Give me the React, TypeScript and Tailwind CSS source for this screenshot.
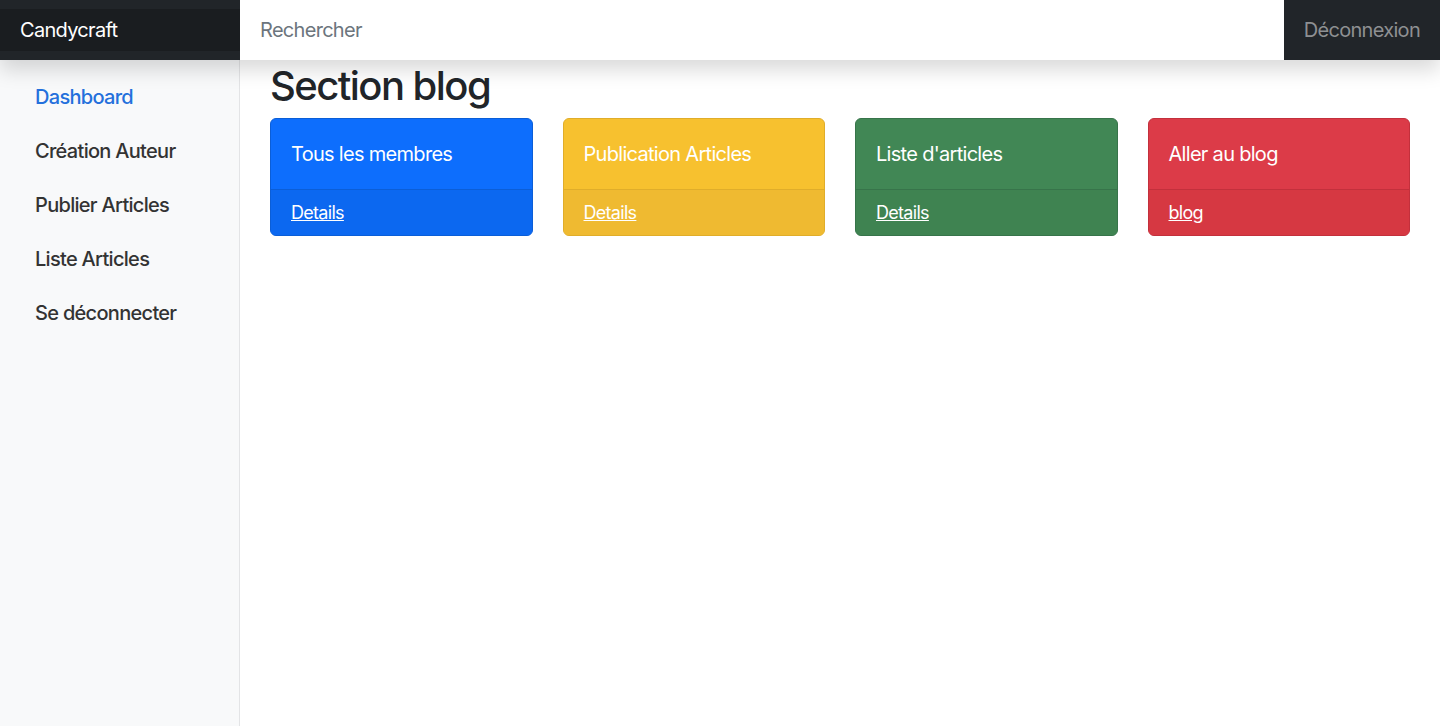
import React from 'react';

interface Tile {
  title: string;
  link: string;
  body: string;
  footer: string;
  border: string;
}

const tiles: Tile[] = [
  { title: 'Tous les membres', link: 'Details', body: 'bg-[#0d6efd]', footer: 'bg-[#0c68f0]', border: 'border-[#0b5ed7]' },
  { title: 'Publication Articles', link: 'Details', body: 'bg-[#f7c12f]', footer: 'bg-[#efba31]', border: 'border-[#e0ad2a]' },
  { title: "Liste d'articles", link: 'Details', body: 'bg-[#418755]', footer: 'bg-[#3f8351]', border: 'border-[#37744a]' },
  { title: 'Aller au blog', link: 'blog', body: 'bg-[#dc3b48]', footer: 'bg-[#d63842]', border: 'border-[#c3303c]' },
];

const navItems = ['Dashboard', 'Création Auteur', 'Publier Articles', 'Liste Articles', 'Se déconnecter'];

const App: React.FC = () => {
  return (
    <div className="flex h-[726px] flex-col bg-white font-['Inter','Liberation_Sans',sans-serif] tracking-[-0.7px] text-[#212529]">
      {/* Navbar */}
      <header className="relative z-10 flex h-[60px] shrink-0 bg-[#212529] shadow-[0_10px_20px_rgba(0,0,0,0.15)]">
        <div className="flex w-[240px] items-center">
          <div className="flex h-[42px] w-full items-center bg-[#1a1d20] px-5 text-[20px] text-white">
            Candycraft
          </div>
        </div>
        <div className="flex flex-1 items-center bg-white px-5 text-[20px] text-[#6c757d]">
          Rechercher
        </div>
        <div className="flex items-center px-5 text-[20px] text-[#8e9092]">Déconnexion</div>
      </header>

      <div className="flex min-h-0 flex-1">
        {/* Sidebar */}
        <nav className="w-[240px] shrink-0 border-r border-[#e3e4e6] bg-[#f8f9fa] pt-[10px]">
          {navItems.map((item, i) => (
            <div
              key={item}
              className={`flex h-[54px] items-center pl-[35px] text-[20px] font-medium ${
                i === 0 ? 'text-[#2470dc]' : 'text-[#333333]'
              }`}
            >
              {item}
            </div>
          ))}
        </nav>

        {/* Main */}
        <main className="flex-1 px-[30px]">
          <h2 className="mt-[2px] text-[40px] leading-[48px] font-medium tracking-[-1.55px]">Section blog</h2>
          <div className="mt-[8px] grid grid-cols-4 gap-[30px]">
            {tiles.map((t) => (
              <div key={t.title} className={`overflow-hidden rounded-[6px] border ${t.border} ${t.body} text-white`}>
                <div className="flex h-[70px] items-center px-5 text-[20px]">{t.title}</div>
                <div className={`flex h-[46px] items-center border-t ${t.border} ${t.footer} px-5 text-[18px] underline`}>
                  {t.link}
                </div>
              </div>
            ))}
          </div>
        </main>
      </div>
    </div>
  );
};

export default App;
